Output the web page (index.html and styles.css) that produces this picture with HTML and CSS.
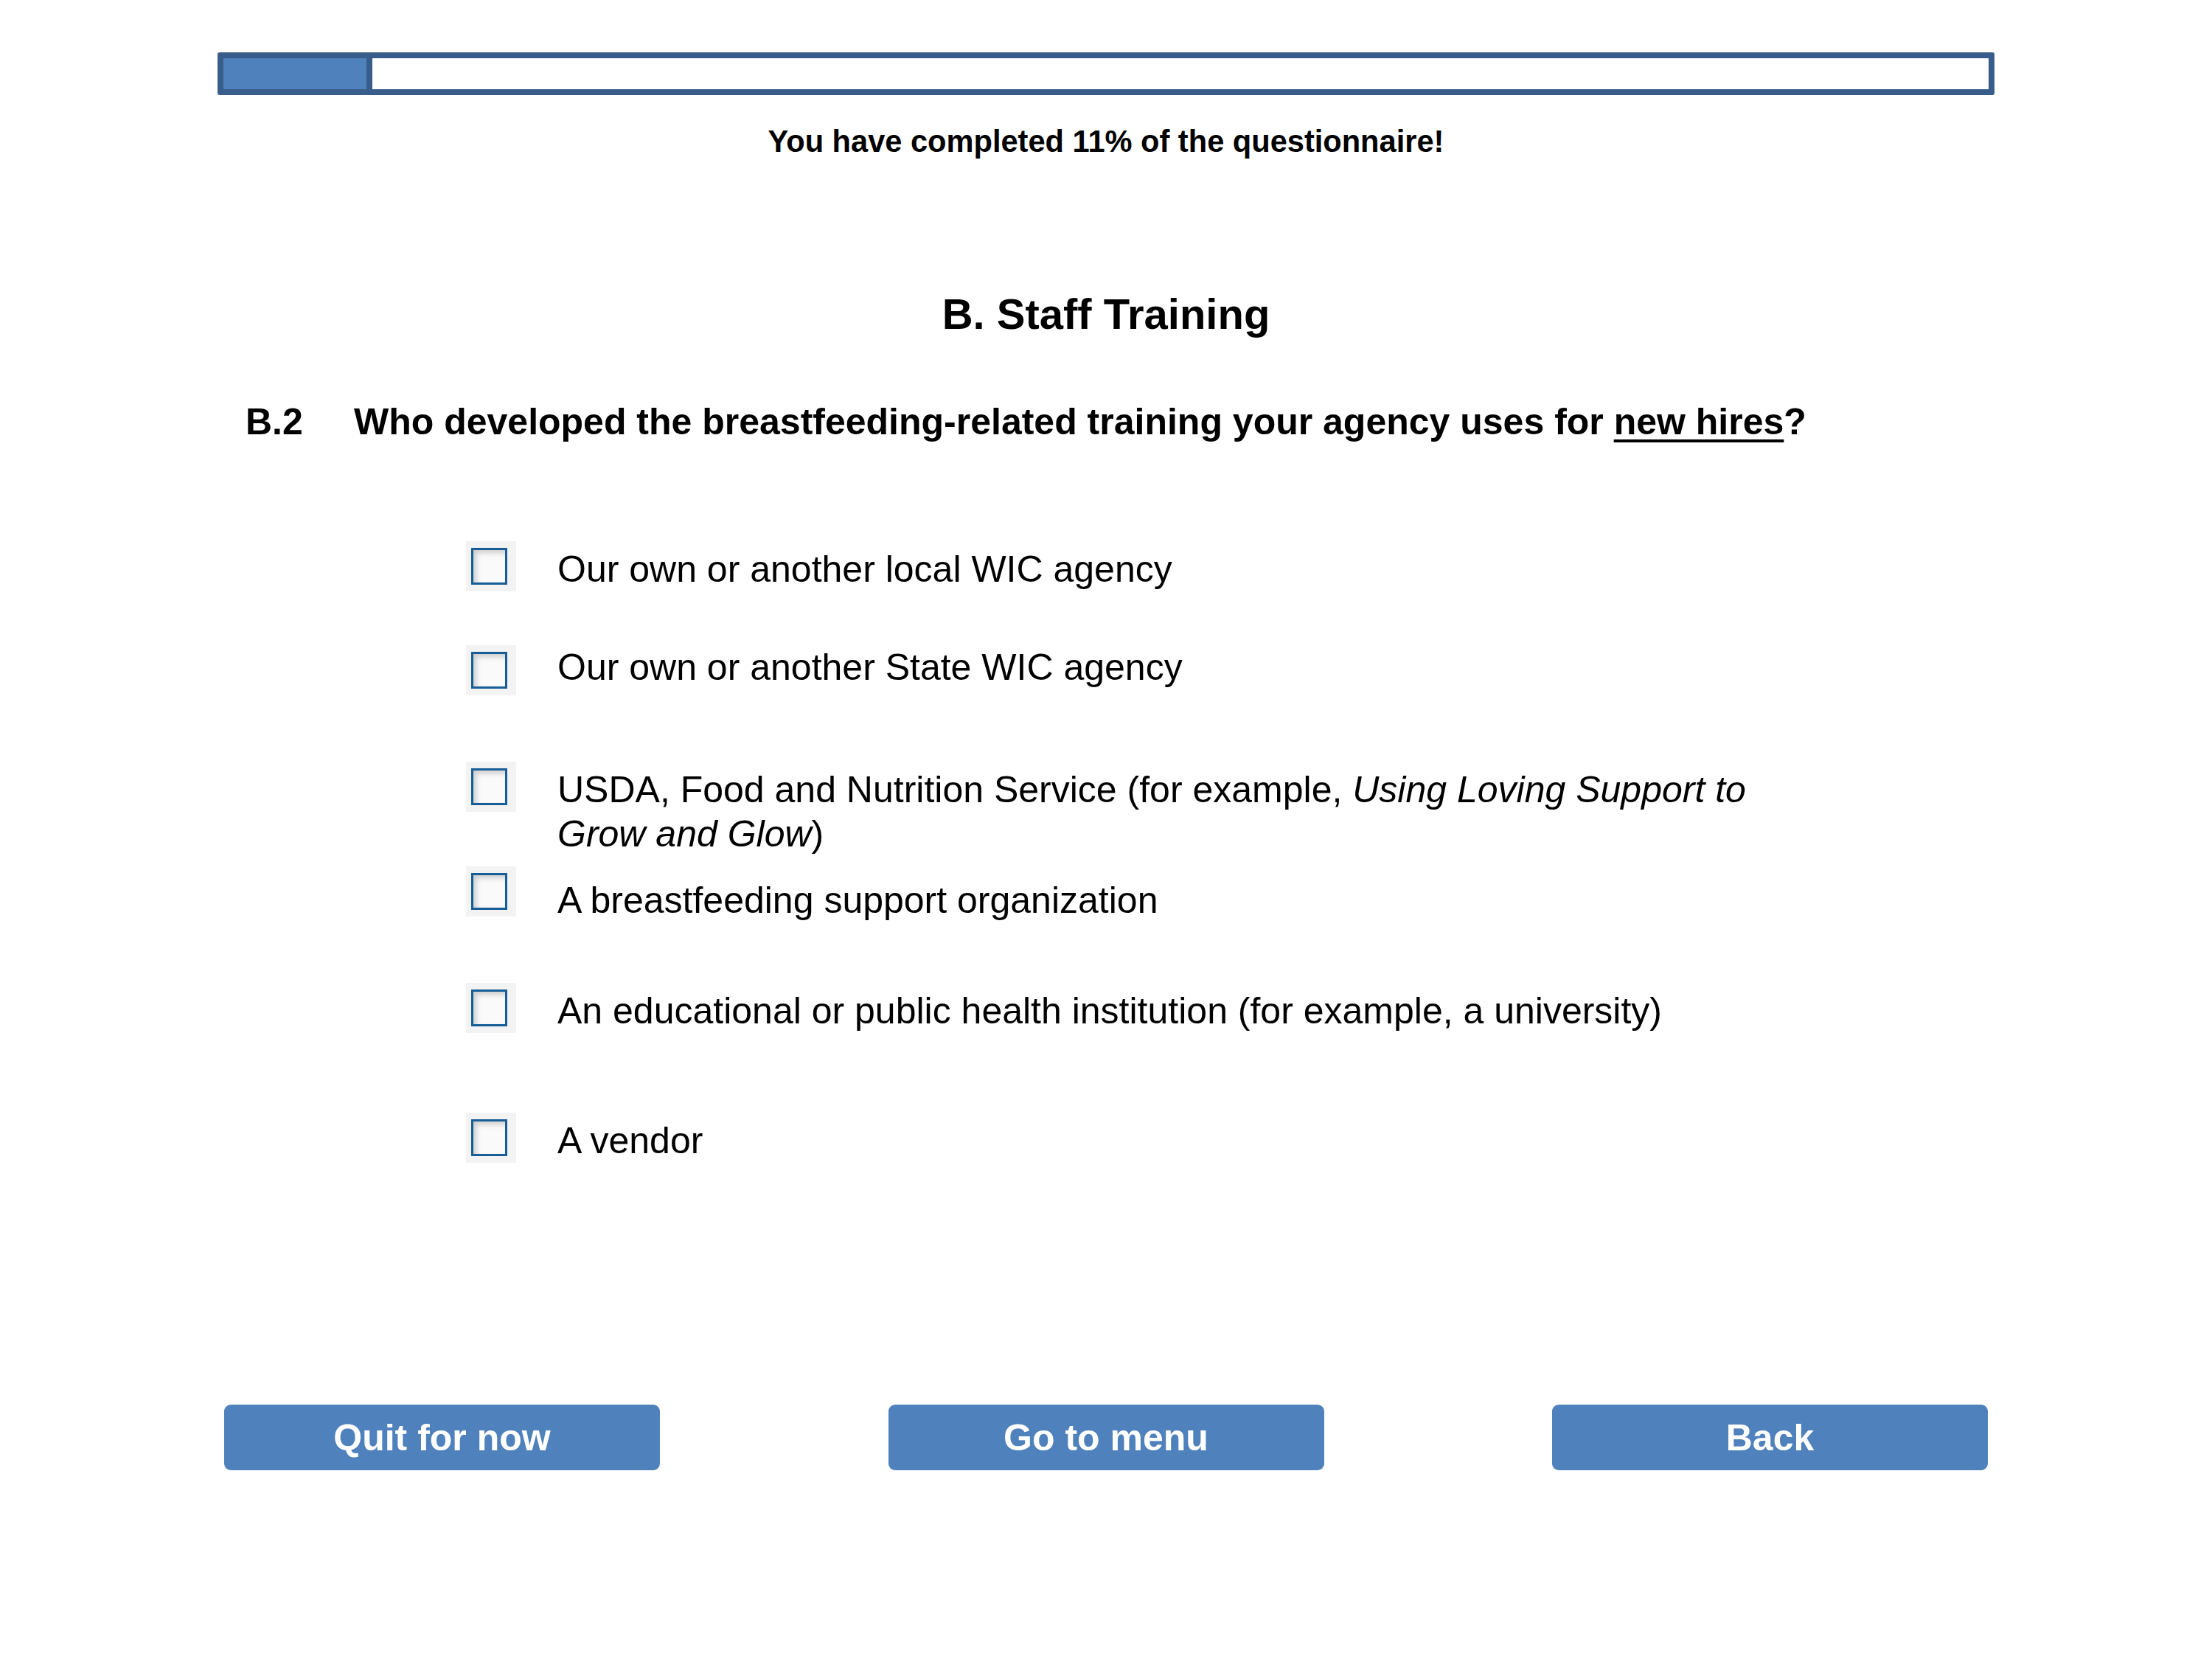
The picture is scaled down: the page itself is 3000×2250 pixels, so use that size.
FILE: index.html
```html
<!DOCTYPE html>
<html>

<head>
    <meta charset="utf-8">
    <meta name="viewport" content="width=device-width, initial-scale=1.0">
    <link rel="stylesheet" href="styles.css">

    <title>B. Staff Training</title>
</head>

<body>
    <div class="page">
        <div class="progress">
            <div class="progress-fill"></div>
        </div>
        <p class="progress-text">You have completed 11% of the questionnaire!</p>

        <h1>B. Staff Training</h1>

        <div class="question">
            <span class="question-nr">B.2</span>
            <span class="question-text">Who developed the breastfeeding-related training your agency uses for <u>new hires</u>?</span>
        </div>

        <div class="options">
            <label class="option">
                <span class="check"><input type="checkbox" name="b2_local"></span>
                <span class="option-text">Our own or another local WIC agency</span>
            </label>
            <label class="option">
                <span class="check check-low"><input type="checkbox" name="b2_state"></span>
                <span class="option-text">Our own or another State WIC agency</span>
            </label>
            <label class="option">
                <span class="check"><input type="checkbox" name="b2_usda"></span>
                <span class="option-text">USDA, Food and Nutrition Service (for example, <em>Using Loving Support to Grow and Glow</em>)</span>
            </label>
            <label class="option">
                <span class="check check-high"><input type="checkbox" name="b2_org"></span>
                <span class="option-text">A breastfeeding support organization</span>
            </label>
            <label class="option">
                <span class="check"><input type="checkbox" name="b2_edu"></span>
                <span class="option-text">An educational or public health institution (for example, a university)</span>
            </label>
            <label class="option">
                <span class="check"><input type="checkbox" name="b2_vendor"></span>
                <span class="option-text">A vendor</span>
            </label>
        </div>

        <div class="buttons">
            <button type="button">Quit for now</button>
            <button type="button">Go to menu</button>
            <button type="button">Back</button>
        </div>
    </div>
</body>

</html>
```

FILE: styles.css
```css
body {
    font-family: "Liberation Sans", Arial, sans-serif;
    background-color: #fff;
    color: #000;
    margin: 0;
}

.page {
    width: 2410px;
    margin: 0 auto;
}

/* Fortschrittsbalken */
.progress {
    margin-top: 71px;
    height: 58px;
    border: 8px solid #385d8a;
    border-radius: 3px;
    box-sizing: border-box;
    background-color: #fff;
}

.progress-fill {
    width: 194px;
    height: 100%;
    background-color: #4f81bd;
    border-right: 8px solid #385d8a;
}

.progress-text {
    margin: 38px 0 0;
    font-size: 41.6px;
    line-height: 50px;
    font-weight: bold;
    text-align: center;
}

h1 {
    margin: 175px 0 0;
    font-size: 58px;
    line-height: 68px;
    text-align: center;
}

/* Frage */
.question {
    display: flex;
    margin-top: 82px;
    padding-left: 38px;
    font-size: 50px;
    line-height: 60px;
    font-weight: bold;
}

.question-nr {
    width: 147px;
    flex-shrink: 0;
}

.question u {
    text-decoration-thickness: 4px;
    text-underline-offset: 7px;
}

/* Antworten */
.options {
    display: grid;
    grid-template-rows: 133px 166px 150px 150px 176px auto;
    margin-top: 132px;
    padding-left: 337px;
}

.option {
    display: flex;
    align-items: flex-start;
    cursor: pointer;
}

.check {
    display: block;
    flex-shrink: 0;
    width: 68px;
    height: 68px;
    padding: 9px 12px 9px 7px;
    box-sizing: border-box;
    background-color: #f3f3f3;
}

.check-low {
    margin-top: 8px;
}

.check-high {
    margin-top: -8px;
}

.check input {
    appearance: none;
    -webkit-appearance: none;
    display: block;
    width: 49px;
    height: 50px;
    margin: 0;
    border: 3px solid #175e97;
    box-sizing: border-box;
    background-color: #fafafa;
    box-shadow: inset 4px 4px 7px rgba(0, 0, 0, 0.18);
    cursor: pointer;
}

.check input:checked {
    background-color: #4f81bd;
}

.option-text {
    max-width: 1660px;
    margin-left: 56px;
    padding-top: 8px;
    font-size: 50px;
    line-height: 60px;
}

/* Buttons */
.buttons {
    display: flex;
    justify-content: space-between;
    margin: 328px 9px 0;
}

button {
    width: 591px;
    height: 89px;
    padding: 0;
    border: none;
    border-radius: 9px;
    background-color: #4f81bd;
    color: #fff;
    font-family: "Liberation Sans", Arial, sans-serif;
    font-size: 50px;
    font-weight: bold;
    cursor: pointer;
}

button:hover {
    background-color: #4674ab;
}
```
